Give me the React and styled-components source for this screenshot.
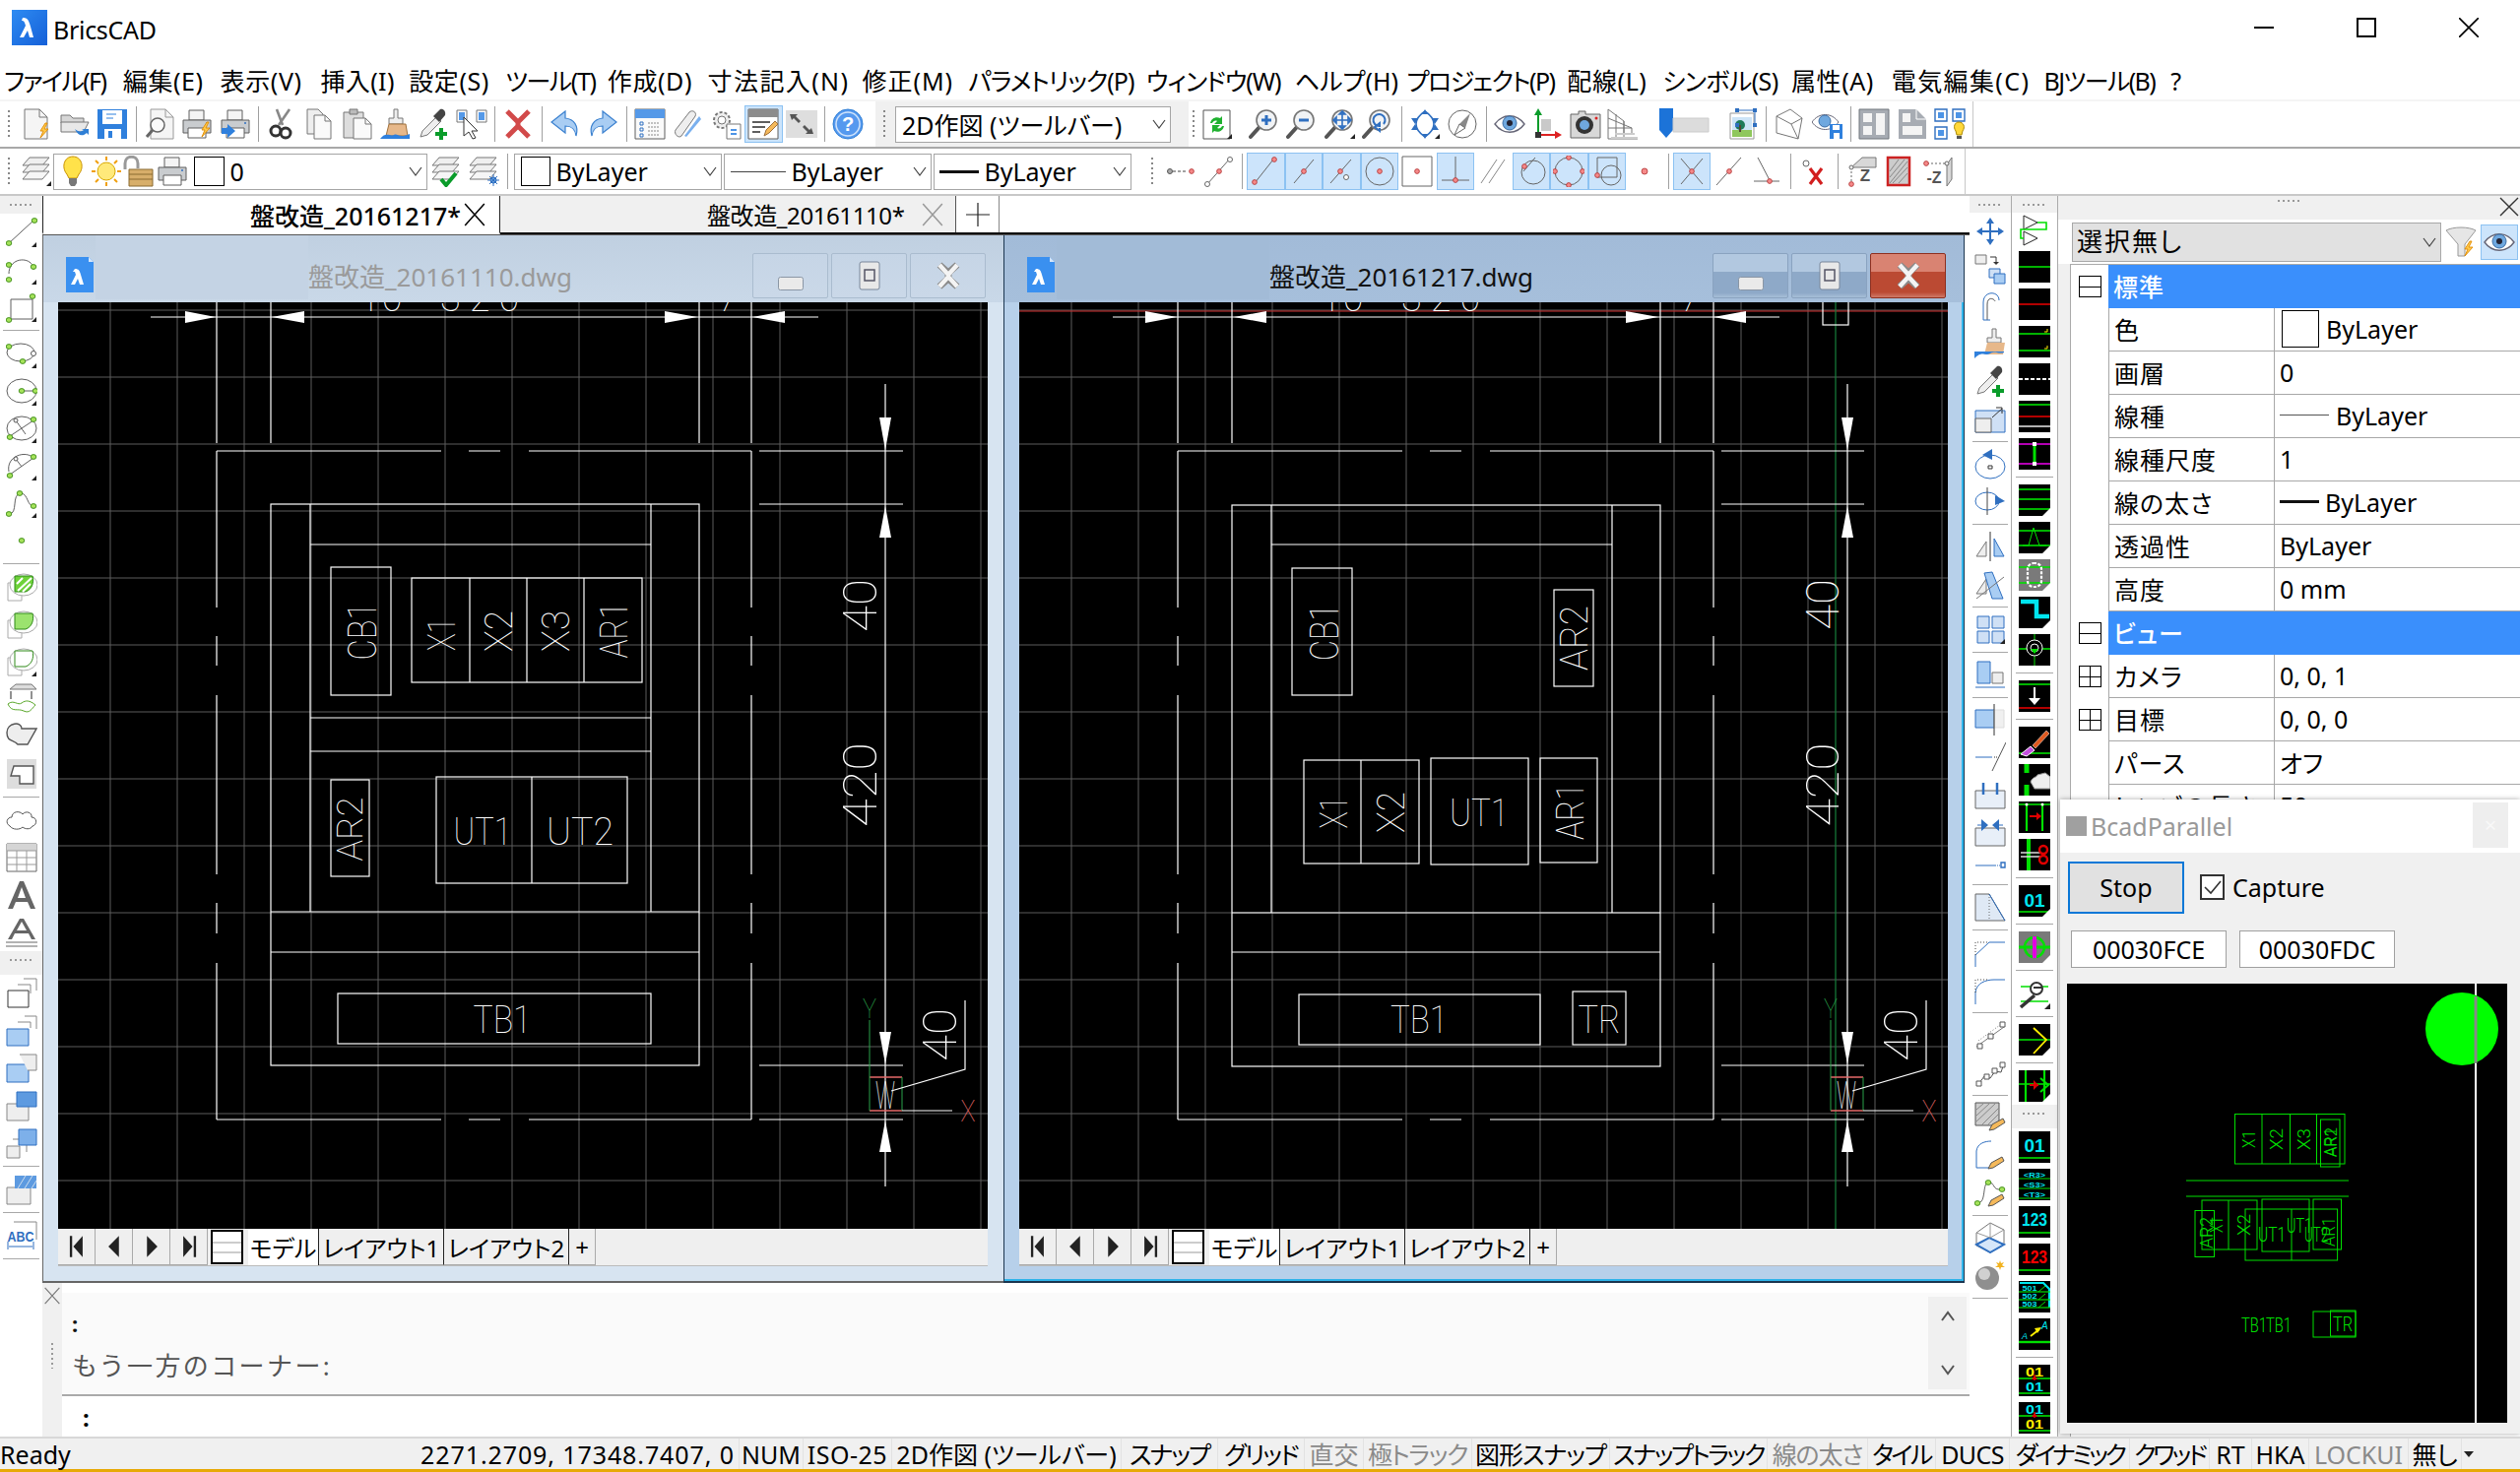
import React from 'react';
import styled, { createGlobalStyle } from 'styled-components';

const Global = createGlobalStyle`
  html, body { margin: 0; padding: 0; background: #fff; overflow: hidden; }
  #root { width: 2559px; height: 1495px; }
  * { box-sizing: border-box; }
`;
const FONT = `"Noto Sans", "Noto Sans CJK JP", sans-serif`;

const Page = styled.div`
  width: 2559px; height: 1495px; position: relative; overflow: hidden; background: #fff;
  display: flex; flex-direction: column; font-family: ${FONT}; font-size: 25px; color: #000;
  font-feature-settings: "palt" 1;
`;
const TitleBar = styled.div`height: 58px; display: flex; align-items: flex-start; flex: none;`;
const AppName = styled.div`margin: 11px 0 0 6px; font-size: 25px; line-height: 38px; letter-spacing: -0.3px;`;
const WinBtns = styled.div`margin-left: auto; display: flex;`;
const WinBtn = styled.div`width: 104px; height: 56px; display: flex; align-items: center; justify-content: center;`;
const MenuBar = styled.div`height: 45px; flex: none; display: flex; align-items: center; padding: 4px 0 0 4px; border-bottom: 2px solid #f4f4f4; white-space: nowrap;`;
const MenuItem = styled.div`width: ${p => p.$w}px; margin-right: 15.8px; font-size: 25px; line-height: 38px; letter-spacing: ${p => p.$ls || 0}px; flex: none;`;

const ToolRow = styled.div`height: ${p => p.$h}px; flex: none; display: flex; align-items: stretch; border-bottom: 2px solid ${p => p.$line};`;
const Tool = styled.div`display: flex; align-items: center; padding-left: ${p => p.$pl || 0}px; width: ${p => p.$w}px; flex: none; background: ${p => p.$bg || '#fff'}; border-right: ${p => p.$end ? '1px solid #c8c8c8' : 'none'};`;
const Grip = styled.div`width: 2px; height: 28px; flex: none; margin: 0 ${p => p.$m || 8}px; background: repeating-linear-gradient(#888 0 2px, transparent 2px 5px);`;
const HGrip = styled.div`height: 2px; width: 24px; margin: ${p => p.$t || 8}px auto 0; background: repeating-linear-gradient(90deg, #999 0 2px, transparent 2px 5px);`;
const Cell = styled.div`
  width: ${p => p.$w || 38.5}px; height: 38px; flex: none; display: flex; align-items: center; justify-content: center;
  ${p => p.$on ? 'background:#cce4fb; box-shadow: inset 0 0 0 1px #8cc2f2;height:38px;' : ''}
`;
const Sep = styled.div`width: 1px; height: 36px; margin: 0 ${p => p.$m ?? 4}px; background: #a0a0a0; flex: none;`;
const Spacer = styled.div`width: ${p => p.$w}px; flex: none;`;
const Combo = styled.div`
  width: ${p => p.$w}px; height: 37px; flex: none; margin-left: ${p => p.$ml || 0}px; background: #fff; border: 1px solid #a5a5a5;
  display: flex; align-items: center; position: relative; padding-left: ${p => p.$pl || 6}px; font-size: 25px; white-space: nowrap;
`;
const Chevron = styled.svg`position: absolute; right: 4px; top: 50%; margin-top: -5px; width: 14px; height: 10px;`;
const Swatch = styled.div`width: ${p => p.$w || 30}px; height: ${p => p.$h || 30}px; border: 1px solid #000; background: #fff; flex: none; margin: 0 ${p => p.$mr || 6}px 0 ${p => p.$ml || 0}px;`;
const LineSample = styled.div`width: ${p => p.$w}px; height: ${p => p.$t}px; background: ${p => p.$c}; flex: none; margin-right: ${p => p.$mr || 6}px;`;

const Body = styled.div`height: 1260px; flex: none; display: flex;`;
const VBar = styled.div`
  width: ${p => p.$w}px; flex: none; display: flex; flex-direction: column; align-items: center; background: #fff;
  border-right: ${p => p.$b ? '1px solid #aaa' : 'none'};
`;
const GripHead = styled.div`width: 100%; height: ${p => p.$h || 18}px; background: #f0f0f0; flex: none;`;
const VCell = styled.div`height: ${p => p.$h || 38}px; width: 100%; flex: none; display: flex; align-items: center; justify-content: center;`;
const VSep = styled.div`height: 1px; width: 84%; background: #a8a8a8; flex: none; margin: ${p => p.$m ?? 4}px 0;`;

const Center = styled.div`width: 1957px; flex: none; display: flex; flex-direction: column; background: #fff;`;
const DocTabs = styled.div`height: 39px; flex: none; display: flex; background: #fff; border-bottom: 2px solid #111; position: relative;`;
const DocTab = styled.div`
  width: ${p => p.$w}px; flex: none; display: flex; align-items: center; padding-left: ${p => p.$pl}px; font-size: ${p => p.$on ? 25 : 24}px; letter-spacing: ${p => p.$on ? 0 : -0.4}px;
  background: ${p => p.$on ? '#fff' : p.$plain ? '#fff' : '#f0f0f0'}; border-right: 1px solid ${p => p.$on ? '#222' : p.$plain ? '#888' : '#555'};
  border-left: ${p => p.$on ? '1px solid #222' : 'none'}; border-bottom: ${p => p.$on ? '2px solid #fff' : 'none'}; margin-bottom: ${p => p.$on ? '-2px' : '0'};
  font-weight: ${p => p.$on ? 500 : 400}; white-space: nowrap;
`;
const MdiArea = styled.div`height: 1065px; flex: none; display: flex; padding-right: 4px; border-top: 1px solid #555;`;
const Win = styled.div`
  width: 976px; flex: none; display: flex; flex-direction: column; padding: 0 16px 15px 15px;
  background: ${p => p.$on ? '#b7d0ea' : '#d7e4f1'};
  border: 1px solid ${p => p.$on ? '#1b3650' : '#666'}; border-width: 0 ${p => p.$on ? 1 : 0}px 2px 1px;
  ${p => p.$on ? 'box-shadow: inset 0 -2px 0 #2fb4ea, inset -2px 0 0 #2fb4ea;' : ''}
`;
const WinTitle = styled.div`
  height: 68px; flex: none; margin: 0 -16px 0 -15px; padding: 0 18px 0 23px; display: flex; align-items: flex-start;
  background: ${p => p.$on ? 'linear-gradient(#a2bbd8, #a6bfdb)' : 'linear-gradient(#c0d0e1, #c9d8e8)'};
`;
const TitleFill = styled.div`width: 216px; height: 65px; flex: none; margin-left: 2px; background: ${p => p.$on ? '#a2bbd7' : '#c4d3e4'};`;
const TitleLogo = styled.div`margin-top: 22px; flex: none;`;
const TitleText = styled.div`margin-top: 22px; font-size: 26px; line-height: 40px; color: ${p => p.$on ? '#111' : '#9a9a9a'}; white-space: nowrap;`;
const TitleBtns = styled.div`margin: 18px 0 0 auto; display: flex; gap: 3px;`;
const TitleBtn = styled.div`
  width: 77px; height: 46px; display: flex; align-items: center; justify-content: center; border-radius: 2px; border: 1px solid ${p => p.$close ? '#8d3020' : p.$on ? '#8aa3c0' : '#aabccf'};
  background: ${p => p.$close ? 'linear-gradient(#d98372 0 40%, #bb4a33 40% 88%, #cf7a68)' : p.$on ? 'linear-gradient(#b2c8e0 0 40%, #8ea9c8 40% 90%, #a7bfd8)' : 'linear-gradient(#c6d5e6, #cad8e8)'};
`;
const MinWrap = styled.div`margin-top: 12px;`;
const CanvasBox = styled.div`height: 941px; flex: none; background: #000; overflow: hidden;`;
const Strip = styled.div`height: 38px; flex: none; background: #efefef; display: flex; align-items: stretch; border-bottom: 1px solid #bbb; font-size: 24px; white-space: nowrap;`;
const NavBtn = styled.div`width: 38px; flex: none; display: flex; align-items: center; justify-content: center; border: 1px solid #aaa; border-width: 0 1px 1px 0;`;
const SheetIcon = styled.div`width: 33px; flex: none; margin: 1px 5px 1px 3px; display: flex; border: 2px solid #000; background: #fff; align-items: center; justify-content: center;`;
const SheetTab = styled.div`
  width: ${p => p.$w}px; flex: none; display: flex; align-items: center; justify-content: center; background: ${p => p.$on ? '#fff' : '#efefef'};
  border-right: 1px solid ${p => p.$last ? '#aaa' : '#222'}; border-bottom: ${p => p.$on ? 'none' : '1px solid #aaa'};
`;

const CmdArea = styled.div`height: 156px; flex: none; display: flex;`;
const CmdSide = styled.div`width: 20px; flex: none; background: #f0f0f0; display: flex; flex-direction: column; align-items: center; padding-top: 4px;`;
const CmdGrip = styled.div`width: 2px; height: 26px; margin-top: 39px; background: repeating-linear-gradient(#999 0 2px, transparent 2px 5px);`;
const CmdMain = styled.div`flex: 1; display: flex; flex-direction: column;`;
const CmdTop = styled.div`height: 10px; flex: none;`;
const History = styled.div`height: 105px; flex: none; display: flex; background: #fafafa; border-bottom: 2px solid #aaa;`;
const HistText = styled.div`flex: 1; padding: 10px 0 0 10px; font-size: 26px; line-height: 43px; color: #555; font-feature-settings: normal; letter-spacing: 2.4px;`;
const HistColon = styled.div`color: #111; font-weight: 700; font-size: 22px;`;
const Scroll = styled.div`width: 39px; flex: none; margin: 4px 3px 5px 0; background: #f0f0f0; display: flex; flex-direction: column; align-items: center; justify-content: space-between; padding: 14px 0;`;
const CmdInput = styled.div`flex: 1; background: #fff; padding-left: 21px; font-weight: 700; font-size: 24px; line-height: 44px;`;

const StatusBar = styled.div`height: 36px; flex: none; display: flex; background: #f0f0f0; border-top: 2px solid #d8d8d8; border-bottom: 3px solid #e7a906; font-size: 25px; white-space: nowrap; position: relative; z-index: 3;`;
const Stat = styled.div`width: ${p => p.$w}px; flex: none; display: flex; align-items: center; justify-content: ${p => p.$left ? 'flex-start' : 'center'}; color: ${p => p.$gray ? '#8a8a8a' : '#000'}; border-right: ${p => p.$nb ? 'none' : '1px solid #e2e2e2'}; letter-spacing: ${p => p.$ls || 0}px; line-height: 30px;`;

const Panel = styled.div`width: 469px; flex: none; background: #f0f0f0; display: flex; flex-direction: column; position: relative;`;
const PanelHead = styled.div`height: 24px; flex: none; position: relative;`;
const PanelClose = styled.svg`position: absolute; right: 0; top: 0; width: 22px; height: 22px;`;
const SelRow = styled.div`height: 45px; flex: none; display: flex; align-items: center; padding-left: 14px; background: #fff;`;
const SelCombo = styled.div`width: 375px; height: 40px; flex: none; background: #e1e1e1; border: 1px solid #a8a8a8; display: flex; align-items: center; padding: 0 0 4px 4px; position: relative; font-size: 26px; letter-spacing: 2px;`;
const EyeBtn = styled.div`width: 38px; height: 36px; background: #cce4fb; border: 1px solid #8cc2f2; display: flex; align-items: center; justify-content: center; margin-left: 4px;`;
const Props = styled.div`flex: 1; margin-left: 12px; background: #fff; border-left: 1px solid #aaa; border-top: 1px solid #aaa; overflow: hidden;`;
const Row = styled.div`height: 44px; display: grid; grid-template-columns: 38px 169px 1fr;`;
const Exp = styled.div`display: flex; align-items: center; justify-content: center;`;
const ExpBox = styled.div`width: 23px; height: 22px; border: 1px solid #000; position: relative; background: linear-gradient(#000, #000) center / 100% 1px no-repeat; ${p => p.$plus ? 'background: linear-gradient(#000,#000) center / 100% 1px no-repeat, linear-gradient(#000,#000) center / 1px 100% no-repeat;' : ''}`;
const Section = styled.div`grid-column: 2 / 4; background: #3a8ffc; color: #fff; font-size: 25px; font-weight: 500; display: flex; align-items: center; padding: 0 0 3px 5px; letter-spacing: 1px;`;
const Label = styled.div`border: 1px solid #a8a8a8; border-width: 0 1px 1px 1px; padding: 0 0 2px 5px; display: flex; align-items: center; font-size: 25px; letter-spacing: 1px; white-space: nowrap;`;
const Value = styled.div`border-bottom: 1px solid #a8a8a8; padding: 0 0 2px 5px; display: flex; align-items: center; font-size: 25px; white-space: nowrap;`;

const Float = styled.div`position: absolute; left: 2092px; top: 812px; width: 467px; height: 644px; background: #f0f0f0; box-shadow: 0 0 5px rgba(0,0,0,.35); z-index: 2; display: flex; flex-direction: column;`;
const FloatHead = styled.div`height: 54px; flex: none; background: #fff; display: flex; align-items: center; padding-left: 6px; color: #999; font-size: 25px; position: relative;`;
const FloatIcon = styled.div`width: 21px; height: 20px; background: #a0a0a0; margin-right: 4px;`;
const FloatX = styled.div`position: absolute; right: 12px; top: 3px; width: 36px; height: 46px; background: #eee; color: #f8f8f8; font-size: 22px; text-align: center; line-height: 44px;`;
const FloatBar = styled.div`height: 73px; flex: none; display: flex; align-items: center; padding: 0 0 3px 8px; font-size: 25px;`;
const StopBtn = styled.div`width: 118px; height: 53px; border: 2px solid #0a78d7; background: #e1e1e1; display: flex; align-items: center; justify-content: center;`;
const Check = styled.div`width: 25px; height: 26px; border: 2px solid #333; background: #fff; margin: 0 8px 0 16px; display: flex; align-items: center; justify-content: center;`;
const InputRow = styled.div`height: 60px; flex: none; display: flex; padding: 6px 0 0 11px; gap: 13px;`;
const Hex = styled.div`width: 158px; height: 38px; background: #fff; border: 1px solid #a0a0a0; display: flex; align-items: center; justify-content: center; font-size: 25px;`;
const Preview = styled.div`width: 447px; height: 446px; margin-left: 7px; background: #000; flex: none;`;

const Svg = ({ w = 32, h = 32, vb = '0 0 32 32', children }) => (
  <svg width={w} height={h} viewBox={vb} fill="none" style={{ display: 'block', flex: 'none' }}>{children}</svg>
);

const DK = '#5f5f5f', BL = '#2f6fc0', GR = '#5aa82a';
const Corner = () => <path d="M31 26v5h-5z" fill="#222" />;
const Dot = ({ x, y, r = 2.4, c = '#f58a8a', s = '#b03030' }) => <circle cx={x} cy={y} r={r} fill={c} stroke={s} strokeWidth=".8" />;
const GDot = ({ x, y }) => <ellipse cx={x} cy={y} rx="2.8" ry="2.4" fill="#a6e35a" stroke="#3c8a18" strokeWidth=".9" />;

const Bolt = ({ x = 0, y = 0 }) => <path transform={`translate(${x} ${y})`} d="M6 0L1 8h3l-3 7 8-9H5l3-6z" fill="#ffc94a" stroke="#e08a00" strokeWidth=".9" />;
const Printer = ({ dx = 0 }) => (
  <g transform={`translate(${dx} 0)`}>
    <path d="M8 2h15v10H8z" fill="#f4f4f4" stroke={DK} />
    <path d="M2 12h28v13H2z" fill="#c9cccf" stroke={DK} />
    <path d="M7 20h18v10H7z" fill="#fff" stroke={DK} />
    <circle cx="26" cy="15" r="1" fill={BL} />
  </g>
);
const Mag = ({ children }) => (
  <>
    <path d="M11 19L2 29" stroke="#555" strokeWidth="4" strokeLinecap="round" />
    <circle cx="18" cy="12" r="10" fill="#f1f3f5" stroke="#777" strokeWidth="1.6" />
    {children}
  </>
);
const Stack = ({ children }) => (
  <>
    <path d="M2 10l7-8h20l-7 8z" fill="#efefef" stroke="#777" />
    <path d="M2 17l7-8h20l-7 8z" fill="#efefef" stroke="#777" />
    <path d="M2 24l7-8h20l-7 8z" fill="#f6f6f6" stroke="#777" />
    {children}
  </>
);

const icons = {
  newfile: <><path d="M4 1h15l8 8v22H4z" fill="#f5f5f5" stroke="#777" /><path d="M19 1v8h8" stroke="#777" /><Bolt x="19" y="15" /></>,
  open: <><path d="M2 7h9l3 3h11v5H2z" fill="#d6d6d6" stroke="#777" /><path d="M2 24V14h28l-5 10z" fill="#e8e8e8" stroke="#777" /><path d="M16 21c3 3 7 3 9 1l-2-1h7v6l-2-2c-4 4-9 3-12-4z" fill="#2f7fd5" /></>,
  save: <><path d="M1 1h30v30H1z" fill="#2f80dd" /><path d="M6 2h20v14H6z" fill="#fff" /><path d="M10 6h10M10 10h7" stroke="#2f80dd" /><path d="M8 21h17v10H8z" fill="#fff" /><path d="M12 23h4v7h-4z" fill="#2f80dd" /></>,
  preview: <><path d="M7 1h15l8 8v22H7z" fill="#f5f5f5" stroke="#999" /><path d="M22 1v8h8" stroke="#999" /><circle cx="14" cy="17" r="7" fill="#fafafa" stroke="#666" strokeWidth="1.5" /><path d="M9 22l-6 7" stroke="#666" strokeWidth="3" /></>,
  printbolt: <><Printer /><Bolt x="20" y="14" /></>,
  printto: <><Printer /><path d="M2 20h6v-4l8 7-8 7v-4H2z" fill="#2f80dd" /></>,
  cut: <><path d="M13 17L24 1M17 17L11 1" stroke="#888" strokeWidth="2.6" /><circle cx="10" cy="23" r="5" stroke="#333" strokeWidth="3" /><circle cx="20" cy="25" r="5" stroke="#333" strokeWidth="3" /></>,
  copy: <><path d="M3 1h11l5 5v20H3z" fill="#eee" stroke="#777" /><path d="M10 7h11l6 6v18H10z" fill="#fafafa" stroke="#777" /><path d="M21 7v6h6" stroke="#777" /></>,
  paste: <><path d="M2 4h20v26H2z" fill="#ddd" stroke="#777" /><path d="M8 1h8v5H8z" fill="#bbb" stroke="#777" /><path d="M12 10h12l6 6v15H12z" fill="#fafafa" stroke="#777" /><path d="M24 10v6h6" stroke="#777" /></>,
  brush: <><path d="M14 1h4v9h5v6H9v-6h5z" fill="#eee" stroke="#777" /><path d="M9 16h17l2 12H6z" fill="#e7b88a" stroke="#a0703a" /><path d="M0 31c6-8 10-2 14-4s5 4 16-1v5z" fill="#2f80dd" /></>,
  dropper: <><path d="M3 29l2-6 14-14 5 4-14 14z" fill="#eee" stroke="#777" /><path d="M16 8l7-7c3-1 6 2 5 6l-6 7z" fill="#444" /><path d="M22 20h4v4h4v4h-4v4h-4v-4h-4v-4h4z" fill="#0a9c2a" /></>,
  select: <><path d="M1 2h10v12H1zM21 2h10v12H21z" fill="#fff" stroke="#777" /><path d="M3 4h6v8H3zM23 4h6v8h-6z" fill="#5599e8" /><path d="M8 9v19l5-4 4 7 3-1-4-7h6z" fill="#fff" stroke="#333" /></>,
  xred: <path d="M5 3l11 11L27 3M5 29l11-11 11 11M16 14v4" stroke="#d24a4a" strokeWidth="5" />,
  undo: <path d="M16 3L2 14l14 11v-7c7 0 10 3 11 10 3-10-2-17-11-18z" fill="#a9cdf3" stroke="#3a80cf" strokeWidth="1.2" />,
  redo: <path d="M16 3l14 11-14 11v-7c-7 0-10 3-11 10C2 18 7 11 16 10z" fill="#a9cdf3" stroke="#3a80cf" strokeWidth="1.2" />,
  props: <><path d="M1 1h30v30H1z" fill="#fafafa" stroke={DK} /><path d="M1 1h30v9H1z" fill="#5599e8" /><path d="M6 14h3v3H6zM6 20h3v3H6zM6 26h3v3H6z" stroke={BL} /><path d="M14 15h12M14 19h12M14 23h12M14 27h12" stroke="#888" strokeDasharray="2 1" /></>,
  sheet: <><path d="M4 22L18 4c3-3 8 0 6 4L10 28c-3 3-8-2-6-6z" fill="#eee" stroke="#777" /><path d="M13 28L28 8l2 3-15 18z" fill="#7ab0ee" /></>,
  gear: <><circle cx="12" cy="12" r="8" fill="#eee" stroke="#777" strokeWidth="2" strokeDasharray="3 2" /><circle cx="12" cy="12" r="4" fill="#fff" stroke="#777" /><path d="M17 16h14v15H17z" fill="#fff" stroke="#777" /><path d="M21 21h6v2h-6zM21 25h6v2h-6z" fill="#4d94e6" /></>,
  notes: <><path d="M1 1h30v30H1z" fill="#fff" stroke={DK} /><path d="M1 1h30v8H1z" fill="#8c8c8c" /><path d="M5 14h18M5 19h13M5 24h8" stroke={DK} strokeWidth="1.8" /><path d="M17 28l2-6 9-9 3 3-9 9z" fill="#f5b95a" stroke="#a0703a" /></>,
  expand: <><path d="M0 2h32v28H0z" fill="#dedede" /><path d="M4 6h8l-2 2 5 5-2 2-5-5-2 2zM28 26h-8l2-2-5-5 2-2 5 5 2-2z" fill="#555" /></>,
  help: <><circle cx="16" cy="16" r="15" fill="#5599ef" stroke="#2f7fd5" /><circle cx="16" cy="16" r="12" stroke="#cfe3fb" strokeWidth="1.5" /><text x="16" y="23" fontSize="20" fontWeight="700" fontFamily="Liberation Sans" fill="#fff" textAnchor="middle">?</text></>,
  sync: <><path d="M2 2h27v29H2z" fill="#fff" stroke="#555" /><path d="M9 15c1-5 6-7 10-5l2-2v8h-8l3-3c-2-1-4 0-5 2zM23 18c-1 5-6 7-10 5l-2 2v-8h8l-3 3c2 1 4 0 5-2z" fill="#1fb12f" /><Corner /></>,
  zoomin: <Mag><path d="M13 12h10M18 7v10" stroke={BL} strokeWidth="3" /></Mag>,
  zoomout: <Mag><path d="M13 12h10" stroke={BL} strokeWidth="3" /></Mag>,
  zoompan: <Mag><path d="M18 4v16M10 12h16M18 3l-3 3h6zM18 21l-3-3h6zM9 12l3-3v6zM27 12l-3-3v6z" stroke={BL} strokeWidth="1.6" /><Corner /></Mag>,
  zoomprev: <Mag><path d="M22 16a6 6 0 1 0-4 2v-3l-5 4 5 4v-3" stroke={BL} strokeWidth="2" /></Mag>,
  orbit: <><path d="M16 3c-12 8-12 18 0 26M16 3c12 8 12 18 0 26" stroke={BL} strokeWidth="1.6" /><path d="M16 1l-3 5h6zM16 31l-3-5h6zM2 10l7 0-3 6zM30 10h-7l3 6zM2 22l7 0-3-6zM30 22h-7l3-6z" fill={BL} /><Corner /></>,
  compass: <><circle cx="16" cy="16" r="14" fill="#fff" stroke="#666" /><path d="M24 5L13 16l6 4z" fill="#888" /><path d="M8 27l5-11 6 4z" fill="#fff" stroke="#666" /></>,
  eye: <><path d="M1 16c8-11 22-11 30 0-8 11-22 11-30 0z" fill="#fff" stroke="#667" strokeWidth="1.4" /><circle cx="16" cy="15" r="7" fill="#6fa8df" stroke="#3b6da5" /><circle cx="16" cy="15" r="3" fill="#223" /></>,
  ucs: <><path d="M7 26V3" stroke="#0a9c2a" strokeWidth="2" /><path d="M7 0l-4 7h8z" fill="#0a9c2a" /><path d="M7 27h18" stroke="#d22" strokeWidth="2" /><path d="M31 27l-7-4v8z" fill="#d22" /><path d="M4 24h6v6H4z" fill="#333" /><path d="M10 11h10v12H10z" fill="#c9c9c9" /></>,
  camera: <><path d="M1 6h8V3h7v3h15v24H1z" fill="#d8d8d8" stroke="#666" /><circle cx="15" cy="17" r="9" fill="#333" /><circle cx="15" cy="17" r="5" fill="#6fa8df" /><circle cx="27" cy="10" r="1.5" fill="#d22" /></>,
  persp: <><path d="M1 1v30h30M1 1l16 12v14M1 10l24 10v7M1 20h24M9 6v25M17 13v18" stroke="#777" /><path d="M4 30h27M8 26h20" stroke="#ccc" strokeWidth="2" /></>,
  image: <><path d="M3 5h24v26H3z" fill="#fff" stroke="#999" /><path d="M5 22h20v7H5z" fill="#8fc75c" /><path d="M5 9h20v13H5z" fill="#cde4f7" /><circle cx="13" cy="17" r="5" fill="#1e7a5a" /><path d="M13 17v7" stroke="#543" strokeWidth="2" /><path d="M10 2h18v17" stroke="#2f6fc0" /><path d="M8 0h4v4H8zM26 0h4v4h-4zM26 15h4v4h-4zM8 15h4v4H8z" fill="#2f6fc0" /></>,
  cube: <><path d="M3 8l14-7 12 9-4 21-22-6z" fill="#fff" stroke="#777" /><path d="M3 8l15 8 11-6M18 16l7 15" stroke="#777" /></>,
  eyesave: <><path d="M0 14c7-10 20-10 27 0-7 10-20 10-27 0z" fill="#fff" stroke="#667" /><circle cx="13" cy="13" r="6" fill="#6fa8df" stroke="#3b6da5" /><path d="M18 16h13v15H18z" fill="#2f80dd" /><path d="M21 17h7v5h-7zM22 25h6v6h-6z" fill="#fff" /></>,
  panel1: <><path d="M1 1h30v30H1z" fill="#a7acb3" stroke="#70767d" /><path d="M5 5h9v9H5zM5 18h9v9H5zM18 5h9v22h-9z" fill="#f4f4f4" /></>,
  panel2: <><path d="M2 1h18l10 10v20H2z" fill="#a7acb3" /><path d="M6 5h8v9H6zM6 18h20v9H6z" fill="#f4f4f4" /><path d="M20 1v10h10" stroke="#fff" /></>,
  panel3: <><path d="M1 1h12v12H1zM1 19h12v12H1zM19 1h12v12H19z" fill="#fff" stroke={BL} strokeWidth="1.4" /><path d="M4 4h6v6H4zM4 22h6v6H4zM22 4h6v6h-6z" fill="#4d94e6" /><path d="M25 14c5 0 7 5 4 9l-1 4h-5l-1-4c-3-4-1-9 3-9z" fill="#ffd83a" stroke="#a80" /><path d="M23 28h5v3h-5z" fill="#555" /></>,
  layer: <><Stack /><Corner /></>,
  layercheck: <Stack><path d="M11 24l5 6 10-12" stroke="#0a9c2a" strokeWidth="4" /></Stack>,
  layerstar: <Stack><circle cx="26" cy="25" r="3" fill="#8fc3f5" stroke={BL} /><path d="M26 19v12M20 25h12M22 21l8 8M30 21l-8 8" stroke={BL} /></Stack>,
  bulb: <><path d="M14 1c9 0 12 11 6 18l-2 4H10l-2-4C2 12 5 1 14 1z" fill="#ffe24a" stroke="#c89000" /><path d="M10 23h8v5l-2 3h-4l-2-3z" fill="#777" /></>,
  sun: <><circle cx="16" cy="16" r="9" fill="#ffe97a" stroke="#d9a800" /><path d="M16 1v4M16 27v4M1 16h4M27 16h4M5 5l3 3M24 24l3 3M5 27l3-3M24 8l3-3" stroke="#f0a010" strokeWidth="2" /></>,
  lock: <><path d="M3 14V8c0-9 13-9 13 0v5" stroke="#999" strokeWidth="3" /><path d="M7 14h24v17H7z" fill="#d7ae6a" stroke="#8a6a30" /><path d="M7 19h24M7 24h24" stroke="#8a6a30" /></>,
  print: <Printer />,
  dashdot: <><circle cx="5" cy="16" r="2.5" fill="#aaa" stroke="#555" /><path d="M8 16h15" stroke="#444" strokeDasharray="3 2" /><Dot x="27" y="16" /></>,
  snapline: <><path d="M4 29L27 3" stroke="#666" /><circle cx="27" cy="4" r="2.5" fill="#fff" stroke="#666" /><circle cx="4" cy="29" r="2.5" fill="#fff" stroke="#666" /><Dot x="16" y="16" /></>,
  end: <><path d="M5 28L24 4" stroke="#666" /><Dot x="5" y="27" /><Dot x="25" y="4" /></>,
  mid: <><path d="M6 28L26 4" stroke="#666" /><Dot x="16" y="16" /></>,
  mid2: <><path d="M5 28L26 4" stroke="#666" /><Dot x="15" y="16" /><circle cx="21" cy="22" r="2.5" fill="#fff" stroke="#666" /></>,
  cen: <><circle cx="16" cy="16" r="14" stroke="#666" /><Dot x="16" y="16" /></>,
  node: <><path d="M1 1h30v30H1z" fill="#fff" stroke="#666" /><Dot x="16" y="16" /></>,
  perp: <><path d="M16 1v24M2 25h28" stroke="#666" /><Dot x="16" y="25" /></>,
  par: <path d="M4 28L20 4M12 28L28 4" stroke="#888" />,
  tan: <><circle cx="18" cy="17" r="12" stroke="#666" /><path d="M8 16L20 2" stroke="#666" /><Dot x="9" y="11" /></>,
  quad: <><ellipse cx="16" cy="16" rx="14" ry="14" stroke="#666" /><Dot x="16" y="2" /><Dot x="16" y="30" /><Dot x="2" y="16" /><Dot x="30" y="16" /></>,
  circsq: <><path d="M6 2h20v20H6z" stroke="#666" /><circle cx="20" cy="20" r="10" stroke="#666" /><Dot x="6" y="20" /></>,
  dot: <Dot x="16" y="16" r="3" />,
  inter: <><path d="M5 3l22 26M27 3L5 29" stroke="#666" /><Dot x="16" y="16" /></>,
  ext: <><path d="M3 30L28 2" stroke="#666" /><Dot x="16" y="16" /></>,
  tri: <><path d="M6 2l12 23M2 26h26" stroke="#666" /><Dot x="18" y="26" /></>,
  xs: <><circle cx="8" cy="8" r="3" fill="#fff" stroke="#666" /><path d="M12 13l12 16M24 13L12 29" stroke="#d21f1f" strokeWidth="3.2" /></>,
  zup: <><path d="M6 12L17 2h14v10z" fill="#d8d8d8" stroke="#777" /><path d="M6 12v17" stroke="#666" strokeDasharray="2 2" /><circle cx="6" cy="12" r="2" fill="#fff" stroke="#666" /><Dot x="6" y="29" /><text x="20" y="26" fontSize="17" fontWeight="700" fontFamily="Liberation Sans" fill="#555" textAnchor="middle">Z</text></>,
  rectred: <><path d="M5 2h22v28H5z" fill="#ccc" stroke="#c22" strokeWidth="2.5" /><path d="M7 28L25 6M7 22L22 4M10 28L25 12M7 16L16 4M16 28l9-10" stroke="#888" /></>,
  zdown: <><path d="M31 2v22l-5 7V9z" fill="#d8d8d8" stroke="#777" /><path d="M6 8h19" stroke="#666" strokeDasharray="2 2" /><Dot x="5" y="8" /><circle cx="26" cy="8" r="2" fill="#fff" stroke="#666" /><text x="13" y="28" fontSize="16" fontWeight="700" fontFamily="Liberation Sans" fill="#555" textAnchor="middle">-Z</text></>,
  line: <><path d="M3 27L28 4" stroke={DK} /><GDot x="3" y="27" /><GDot x="29" y="4" /><Corner /></>,
  arc: <><path d="M3 20C3 2 28 2 28 16" stroke={DK} /><GDot x="3" y="11" /><GDot x="3" y="26" /><GDot x="28" y="13" /><Corner /></>,
  rect: <><path d="M5 8h22v20H5z" stroke={DK} /><GDot x="27" y="5" /><GDot x="3" y="29" /><Corner /></>,
  c3: <><ellipse cx="15" cy="15" rx="14" ry="9" stroke={DK} /><GDot x="3" y="9" /><GDot x="17" y="24" /><circle cx="28" cy="16" r="2.5" fill="#fff" stroke="#555" /><Corner /></>,
  c2: <><ellipse cx="16" cy="16" rx="15" ry="12" stroke={DK} /><path d="M16 16h14" stroke={DK} /><GDot x="16" y="16" /><GDot x="30" y="16" /><Corner /></>,
  ell: <><ellipse cx="16" cy="16" rx="15" ry="12" stroke={DK} /><path d="M4 24L28 8M10 8l10 14" stroke={DK} /><GDot x="4" y="25" /><GDot x="28" y="7" /><circle cx="10" cy="8" r="2" fill="#fff" stroke="#555" /><Corner /></>,
  ellarc: <><path d="M3 22C0 6 20 0 28 8" stroke={DK} /><path d="M4 25L28 8M10 9l6 8" stroke={DK} /><GDot x="4" y="26" /><GDot x="28" y="7" /><circle cx="10" cy="9" r="2" fill="#fff" stroke="#555" /><Corner /></>,
  spline: <><path d="M3 27c10 0 2-20 12-21 8 0 6 14 14 13" stroke={DK} /><GDot x="3" y="27" /><GDot x="14" y="6" /><GDot x="28" y="19" /><Corner /></>,
  gdot: <GDot x="16" y="16" />,
  hatch: <><path d="M2 12h14v18H2z" fill="#fff" stroke="#aaa" /><ellipse cx="18" cy="14" rx="14" ry="11" fill="#fff" stroke="#aaa" /><path d="M9 5h18c2 7-1 14-7 16H9z" fill="#6ed23a" stroke="#2f8a18" /><path d="M12 20L26 7M17 21l8-8M11 13l6-6" stroke="#fff" strokeWidth="2" /></>,
  grad: <><path d="M2 12h14v18H2z" fill="#fff" stroke="#aaa" /><ellipse cx="18" cy="14" rx="14" ry="11" fill="#fff" stroke="#aaa" /><path d="M9 5h18c2 7-1 14-7 16H9z" fill="#9be36e" stroke="#2f8a18" /></>,
  bound: <><path d="M2 12h14v18H2z" fill="#fff" stroke="#aaa" /><ellipse cx="18" cy="14" rx="14" ry="11" fill="#fff" stroke="#aaa" /><path d="M9 5h18c2 7-1 14-7 16H9z" fill="#fff" stroke="#2f8a18" /><Corner /></>,
  surf: <><path d="M4 6L10 1h16l5 5z" fill="#ddd" stroke="#777" /><path d="M5 8v8M26 8v8" stroke="#222" /><path d="M2 21c6-5 10 2 14-1s8-3 14 2c-4 4-6 9-12 6S6 30 2 21z" stroke={GR} /></>,
  region: <path d="M1 12C1 2 16 0 16 8h15l-9 16H12c-4-5-11-2-11-12z" fill="#eee" stroke="#555" strokeWidth="1.4" />,
  wipe: <><path d="M1 1h30v30H1z" fill="#ddd" /><path d="M8 8h20v18H14v-8H5z" fill="#fff" stroke="#555" strokeWidth="1.4" /></>,
  cloud: <path d="M4 22c-5-3-3-9 2-9 0-6 8-7 11-3 3-4 10-2 9 3 6 0 6 8 1 9-2 4-8 3-10 1-3 3-10 3-13-1z" stroke="#555" />,
  table: <><path d="M1 2h30v28H1z" fill="#fff" stroke="#666" /><path d="M1 2h30v7H1z" fill="#d5d5d5" /><path d="M1 9h30M1 16h30M1 23h30M11 9v21M21 9v21" stroke="#999" /></>,
  bigA: <path fillRule="evenodd" d="M2 30L14 2h4l12 28h-5l-3-7H10l-3 7zM12 19h8l-4-11z" fill="#666" />,
  bigAu: <><path fillRule="evenodd" d="M2 23L14 2h4l12 21h-4l-3-6H9l-3 6zM11 14h10L16 5z" fill="#666" /><path d="M0 26h32M0 30h32" stroke="#666" /></>,
  b1: <><path d="M2 13h21v17H2z" fill="#fff" stroke="#333" /><path d="M12 7h13v9M18 1h13v12" stroke="#888" /></>,
  b2: <><path d="M1 14h22v17H1z" fill="#a9cdf3" stroke={BL} /><path d="M12 7h13v6M19 1h12v13" stroke="#888" /></>,
  b3: <><path d="M1 12h22v18H1z" fill="#a9cdf3" stroke={BL} /><path d="M14 2h17v16H22" fill="#eee" stroke="#888" /></>,
  b4: <><path d="M1 14h22v17H1z" fill="#eee" stroke="#888" /><path d="M11 2h20v15H11z" fill="#5d9ae0" stroke={BL} /></>,
  b5: <><path d="M1 19h13v12H1z" fill="#eee" stroke="#888" /><path d="M7 12h14v13" stroke="#888" /><path d="M13 2h18v16H13z" fill="#7db0ea" stroke={BL} /></>,
  b6: <><path d="M1 14h24v17H1z" fill="#eee" stroke="#888" /><path d="M9 2h22v13H9z" fill="#5d9ae0" /><path d="M12 15l8-13M19 15l8-13M26 15l5-8" stroke="#cde" /></>,
  abc: <><path d="M8 2h23v18" stroke="#888" /><text x="15" y="22" fontSize="14" fontWeight="700" fontFamily="Liberation Sans" textAnchor="middle" fill={BL} textLength="27" lengthAdjust="spacingAndGlyphs">ABC</text><path d="M2 22v8M28 22v8M3 27h24" stroke={BL} /></>,
  move: <path d="M16 2l-4 6h3v7H8v-3l-6 4 6 4v-3h7v7h-3l4 6 4-6h-3v-7h7v3l6-4-6-4v3h-7V8h3z" fill={BL} />,
  cpy: <><path d="M1 2h11v9H1z" fill="#eee" stroke="#777" /><path d="M16 4h6v6" stroke="#333" /><path d="M19 9l3 3 3-3" fill="#333" /><path d="M15 16h11v9H15z" fill="#cfe0f5" stroke={BL} /><path d="M20 21h11v10H20z" fill="#a9cdf3" stroke={BL} /></>,
  offset: <><path d="M9 30V12C9 0 25 0 25 10" stroke={BL} /><path d="M13 30V14c0-8 7-6 8-3" stroke="#555" /><path d="M9 30h7" stroke={BL} /></>,
  sbrush: <><path d="M18 1h4v9h5v5H13v-5h5z" fill="#eee" stroke="#777" /><path d="M13 15h18l-2 12H10z" fill="#e7b88a" /><path d="M0 31c8-8 10-2 16-5s8 1 14-1v-1H0z" fill="#2f80dd" /></>,
  scale: <><path d="M1 8h30v22H1z" fill="#cfe0f5" stroke={BL} /><path d="M1 16h16v14H1z" fill="#eee" stroke="#666" /><path d="M18 15L28 6M22 5h6v6" stroke="#333" /></>,
  rot: <><ellipse cx="16" cy="19" rx="15" ry="12" stroke={BL} /><path d="M18 1L8 7l10 5z" fill={BL} /><path d="M14 18h4v3h-4z" stroke="#333" /></>,
  rot3: <><ellipse cx="13" cy="16" rx="12" ry="9" stroke={BL} /><path d="M13 2v28" stroke="#444" /><path d="M31 16l-10-6v10z" fill={BL} /></>,
  mirror: <><path d="M12 26H2l10-15z" fill="#eee" stroke="#777" /><path d="M16 1v30" stroke="#333" /><path d="M20 26h10L20 8z" fill="#a9cdf3" stroke={BL} /></>,
  mirror3: <><path d="M12 26H2l10-15z" fill="#eee" stroke="#777" /><path d="M10 5l8 26h11L18 4z" fill="#a9cdf3" stroke={BL} /><path d="M2 31L30 9" stroke="#777" /></>,
  array: <><path d="M3 3h12v12H3zM18 3h12v12H18zM3 18h12v12H3zM18 18h12v12H18z" fill="#cfe0f5" stroke={BL} /><Corner /></>,
  align: <><path d="M3 3h13v22H3z" fill="#a9cdf3" stroke={BL} /><path d="M18 14h11v11H18z" fill="#eee" stroke="#777" /><path d="M1 29h30" stroke={BL} /></>,
  trim: <><path d="M1 6h19v18H1z" fill="#a9cdf3" stroke={BL} /><path d="M20 6h10v18H20z" fill="#f0f0f0" stroke="#ddd" /><path d="M20 0v32" stroke="#333" /></>,
  extline: <><path d="M1 16h17" stroke={BL} /><path d="M20 16h3" stroke="#333" strokeDasharray="1 1" /><path d="M32 1L18 30" stroke="#555" /></>,
  brk: <><path d="M1 12h30v18H1z" fill="#e8eff8" stroke="#666" /><path d="M9 4v12M23 4v12" stroke={BL} strokeWidth="2.5" /></>,
  join: <><path d="M1 12h30v18H1z" fill="#e8eff8" stroke="#666" /><path d="M3 9h10M29 9H19" stroke={BL} /><path d="M14 9L7 3v12zM18 9l7-6v12z" fill={BL} /></>,
  stretch: <><path d="M1 16h20" stroke={BL} /><path d="M21 16h5" stroke={BL} strokeDasharray="1 1" /><path d="M27 13h4v5h-4z" stroke={BL} strokeWidth="1.4" /></>,
  chamf: <><path d="M1 3h14l16 27H1z" fill="#dfe9f5" stroke="#666" /><path d="M15 3v27" stroke="#666" strokeDasharray="1 2" /><path d="M15 3l16 27" stroke={BL} /></>,
  cham2: <><path d="M1 31V19L15 6h16" stroke={BL} /><path d="M1 19V6h14" stroke="#444" strokeDasharray="1 2" /></>,
  fillet: <><path d="M1 31V19C2 9 12 6 20 6h11" stroke={BL} /><path d="M1 19V6h14" stroke="#444" strokeDasharray="1 2" /></>,
  pat1: <><path d="M2 28L30 8" stroke="#777" /><path d="M4 22L26 6" stroke="#777" strokeDasharray="1 2" /><path d="M3 25h5v5H3zM14 15h5v5h-5zM26 3h5v5h-5z" fill="#fff" stroke="#555" /></>,
  pat2: <><path d="M5 27l5-7 6 2 5-7 6 1 2-6" stroke="#555" /><path d="M2 25h5v5H2zM10 18h5v5h-5zM18 12h5v5h-5zM26 6h5v5h-5z" fill="#fff" stroke="#555" /></>,
  hedit: <><path d="M1 1h24v23H1z" fill="#ccc" stroke="#555" /><path d="M2 20L21 2M2 14L15 2M2 8L9 2M7 24L25 6M13 24L25 12" stroke="#888" /><path d="M15 29l3-6 11-6 2 4-11 7z" fill="#f5b95a" stroke="#555" /></>,
  pedit: <><path d="M2 29V12C3 4 11 2 17 2" stroke={BL} /><path d="M2 29h13" stroke={BL} /><path d="M14 30l3-6 11-6 2 4-11 7z" fill="#f5b95a" stroke="#555" /></>,
  spedit: <><path d="M3 27c10 0 4-22 12-21 6 0 3 8 12 7" stroke={DK} /><GDot x="3" y="27" /><GDot x="14" y="6" /><GDot x="28" y="13" /><path d="M14 30l3-6 11-6 2 4-11 7z" fill="#f5b95a" stroke="#555" /></>,
  box3: <><path d="M2 11L16 1l14 7v15L16 31 2 24z" fill="#fff" stroke="#777" /><path d="M2 23l13-7 15 7-14 8z" fill="#d5e6f9" stroke={BL} strokeWidth="2" /><path d="M16 1v15M2 11l14 5 14-8" stroke="#999" /></>,
  bomb: <><circle cx="13" cy="19" r="12" fill="#8f8f8f" /><circle cx="10" cy="15" r="6" fill="#d0d0d0" /><path d="M26 1l1 3 3-1-2 3 3 2-4 0-1 3-1-3-4 0 3-2-2-3 3 1z" fill="#f2b21f" /></>,
  funnel: <><path d="M1 4c7-4 23-4 30 0L20 18v12h-7V18z" fill="#e6e6e6" stroke="#999" /><Bolt x="19" y="15" /></>,
};

const Ic = ({ n, w = 32, h = 32 }) => <Svg w={w} h={h}>{icons[n]}</Svg>;

const G = '#00e000', C = '#00e6f0', Y = '#ffee00', R = '#e00000';
const Tile = ({ bg = '#000', corner, children }) => (
  <Svg>
    <rect width="32" height="32" fill={bg} />
    {children}
    {corner && <path d="M32 24L24 32h8z" fill="#fff" />}
  </Svg>
);
const TT = ({ x = 16, y, s = 15, c = C, children, l }) => (
  <text x={x} y={y} fontSize={s} fontWeight="700" fontFamily="Liberation Sans" fill={c} textAnchor="middle" textLength={l} lengthAdjust={l ? 'spacingAndGlyphs' : undefined}>{children}</text>
);
const ln = (y, c = G, w = 1.6) => <path d={`M0 ${y}h32`} stroke={c} strokeWidth={w} />;
const tiles = [
  <Svg key="sym"><path d="M5 1l14 7-14 7z" fill="#fff" stroke="#222" /><path d="M5 17l14 7-14 7z" fill="#fff" stroke="#222" /><path d="M19 8h9v7H2v9h3" stroke={G} strokeWidth="1.6" /></Svg>,
  <Tile key="a">{ln(16)}</Tile>,
  <Tile key="b">{ln(16, R)}</Tile>,
  <Tile key="c">{ln(8)}{ln(25)}<path d="M26 6h3V3M26 23h3v-3" stroke={Y} /></Tile>,
  <Tile key="d"><path d="M0 16h32" stroke="#fff" strokeWidth="2" strokeDasharray="4 2" /></Tile>,
  <Tile key="e">{ln(4)}{ln(16, R)}{ln(26, '#ddd')}</Tile>,
  <Tile key="f">{ln(6, '#e000e0')}{ln(26, '#e000e0')}<path d="M16 6v20" stroke={G} strokeWidth="3" /><path d="M14 4h4v4h-4zM14 24h4v4h-4z" fill="#fff" /></Tile>,
  <Tile key="g" corner>{ln(5)}{ln(15)}{ln(25)}</Tile>,
  <Tile key="h" corner>{ln(9)}{ln(24)}<path d="M4 24h6l5-18 6 18h7" stroke={G} /></Tile>,
  <Tile key="i" bg="#7a7a7a" corner>{ln(8)}{ln(24)}<rect x="9" y="4" width="14" height="24" rx="6" stroke="#fff" strokeWidth="2.2" strokeDasharray="3 1.5" /></Tile>,
  <Tile key="j" corner><path d="M2 5h16v15h13" stroke={C} strokeWidth="4.5" /></Tile>,
  <Tile key="k">{ln(15)}<path d="M16 0v32" stroke={G} strokeWidth="1" /><circle cx="16" cy="14" r="8" stroke="#fff" fill="#000" /><circle cx="16" cy="14" r="4" stroke="#fff" /><path d="M12 15h8l-4 5z" fill={G} /></Tile>,
  <Tile key="l">{ln(4)}{ln(28, R)}<path d="M16 7v14" stroke="#fff" strokeWidth="2" /><path d="M10 18h12l-6 7z" fill="#fff" /></Tile>,
  <Tile key="m">{ln(27)}<path d="M2 28l10-8 4 4-8 6z" fill="#c44fe0" stroke="#fff" /><path d="M14 19L28 4l3 3-14 15z" fill="#e05a20" stroke="#fff" strokeWidth=".5" /></Tile>,
  <Tile key="n"><path d="M8 0v9M8 21v11" stroke={G} strokeWidth="5" /><path d="M12 18c3-6 6-4 7-7l8-2 5 4v12H16z" fill="#eee" stroke="#999" /></Tile>,
  <Tile key="o">{ln(3)}<path d="M8 2v28M24 2v28" stroke={G} strokeWidth="2.2" /><path d="M11 15h9" stroke={R} strokeWidth="2" /><path d="M23 15l-5-4v8z" fill={R} /><circle cx="8" cy="3" r="1.5" fill="#fff" /><circle cx="24" cy="3" r="1.5" fill="#fff" /></Tile>,
  <Tile key="p"><path d="M10 0v32" stroke={G} strokeWidth="4" /><path d="M2 14h20M2 18h20" stroke="#ddd" strokeWidth="1.6" /><circle cx="25" cy="11" r="4" stroke={R} strokeWidth="2.4" /><circle cx="25" cy="21" r="4" stroke={R} strokeWidth="2.4" /></Tile>,
  <Tile key="q" corner><TT y="22" s="19">01</TT>{ln(27)}</Tile>,
  <Tile key="r" bg="#7a7a7a" corner>{ln(16, G, 3)}<circle cx="16" cy="16" r="10" stroke={G} strokeWidth="2.4" /><path d="M16 5v22" stroke="#e000e0" strokeWidth="4" /></Tile>,
  <Svg key="s"><path d="M2 9h28M2 24h28" stroke={G} strokeWidth="1.6" /><path d="M2 30l14-12" stroke="#333" strokeWidth="3.5" /><circle cx="18" cy="11" r="6" fill="#fff" stroke="#333" strokeWidth="2" /><path d="M15 10h8" stroke="#333" strokeWidth="2" /><path d="M26 32l6-6v6z" fill="#222" /></Svg>,
  <Tile key="t" corner>{ln(16)}<path d="M15 4l13 12-13 14" stroke={Y} strokeWidth="1.8" /></Tile>,
  <Tile key="u" corner>{ln(14)}<path d="M7 0v32M26 0v32" stroke={G} strokeWidth="2.2" /><path d="M11 15h9" stroke={R} strokeWidth="2" /><path d="M20 15l-5-5v10z" fill={R} /><path d="M22 8l8 7-8 7" stroke={G} strokeWidth="2" /></Tile>,
];
const tiles2 = [
  <Tile key="a"><TT y="21" s="19">01</TT>{ln(27)}</Tile>,
  <Tile key="b"><TT y="9" s="7.5" l="22">{'<R3>'}</TT>{ln(10, G, 1)}<TT y="19" s="7.5" l="22">{'<S3>'}</TT>{ln(20, G, 1)}<TT y="29" s="7.5" l="22">{'<T3>'}</TT>{ln(30, G, 1)}</Tile>,
  <Tile key="c"><TT y="20" s="19" l="26">123</TT>{ln(27)}</Tile>,
  <Tile key="d"><TT y="20" s="19" c="#f00" l="26">123</TT>{ln(27)}</Tile>,
  <Tile key="e"><path d="M1 2h24l6 6v19" stroke={C} strokeWidth="2.2" /><TT x="11" y="10" s="6.5" l="15" c={C}>501</TT>{ln(11, G, 1.2)}<TT x="11" y="18" s="6.5" l="15" c={C}>502</TT>{ln(19, G, 1.2)}<TT x="11" y="26" s="6.5" l="15" c={C}>503</TT>{ln(27, G, 1.2)}<path d="M20 11l7-6M20 19l7-6M20 27l7-6" stroke={G} /></Tile>,
  <Tile key="f">{ln(24, G, 2.4)}<text x="3" y="21" fontSize="9" fontStyle="italic" fill={C} fontFamily="Liberation Sans">A</text><text x="23" y="11" fontSize="10" fontStyle="italic" fill={C} fontFamily="Liberation Sans">A</text><path d="M12 18l9-7" stroke={Y} strokeWidth="1.8" /><path d="M23 9l-7 1 3 5z" fill={Y} /></Tile>,
];
const tiles3 = [
  <Tile key="a"><TT y="12" s="12" l="18" c={Y}>01</TT>{ln(14)}<TT y="27" s="12" l="18">01</TT>{ln(29)}<path d="M16 10v6" stroke={R} strokeWidth="1.4" /><path d="M16 11l-3 4h6z" fill={R} /></Tile>,
  <Tile key="b"><TT y="12" s="12" l="18">01</TT>{ln(14)}<TT y="27" s="12" l="18" c={Y}>01</TT>{ln(29)}<path d="M16 10v6" stroke={R} strokeWidth="1.4" /><path d="M16 11l-3 4h6z" fill={R} /></Tile>,
];

const Chev = () => <Chevron viewBox="0 0 14 10"><path d="M1 1l6 8 6-8" fill="none" stroke="#444" strokeWidth="1.2" /></Chevron>;

const CAD = 'Roboto, "Liberation Sans", sans-serif';
const T = ({ cx, cy, len, cap, rot = 0, c = '#fff', children }) => (
  <text transform={`translate(${cx} ${cy}) rotate(${rot})`} x={-len / 2} y={cap / 2} fontSize={cap / 0.71} fontFamily={CAD} fontWeight="100" fill={c} textLength={len} lengthAdjust="spacingAndGlyphs">{children}</text>
);
const Rct = ({ x, y, x2, y2, c = '#fff', w = 1.2 }) => <rect x={x} y={y} width={x2 - x} height={y2 - y} fill="none" stroke={c} strokeWidth={w} />;
const L = ({ d, c = '#fff', w = 1.2 }) => <path d={d} fill="none" stroke={c} strokeWidth={w} />;
const ArrH = ({ x, tip, y }) => <path d={`M${x} ${y - 6}L${tip} ${y}L${x} ${y + 6}z`} fill="#fff" />;
const ArrV = ({ y, tip, x }) => <path d={`M${x - 6} ${y}L${x} ${tip}L${x + 6} ${y}z`} fill="#fff" />;

const Grid = ({ x0, x1, vstart, top = 307, bot = 1248 }) => {
  const vs = [];
  for (let x = vstart; x < x1; x += 68) vs.push(x);
  const hs = [];
  for (let y = 315; y < bot; y += 68) hs.push(y);
  return (
    <g stroke="#5c5c5c" strokeWidth="1">
      {vs.map(x => <path key={x} d={`M${x} ${top}V${bot}`} />)}
      {hs.map(y => <path key={y} d={`M${x0} ${y}H${x1}`} />)}
    </g>
  );
};

const Dims = ({ ox, a, b, dimx, dx1, dx2, a2, b2, tarrows, hx1, hx2 }) => (
  <g>
    <L d={`M${hx1} 322H${hx2}`} />
    {tarrows.map(([x, tip]) => <ArrH key={x} x={x} tip={tip} y={322} />)}
    {[a, a2, b2, b].map(x => <L key={x} d={`M${x} 307V450`} />)}
    <L d={`M${a} 458H${ox + 228}M${ox + 256} 458H${ox + 288}M${ox + 317} 458H${b}`} />
    <L d={`M${a} 1137H${ox + 228}M${ox + 256} 1137H${ox + 288}M${ox + 317} 1137H${b}`} />
    {[a, b].map(x => <L key={x} d={`M${x} 458V617M${x} 646V676M${x} 706V888M${x} 917V948M${x} 978V1137`} />)}
    <L d={`M${dimx} 390V1205`} />
    <ArrV y={424} tip={457} x={dimx} />
    <ArrV y={546} tip={514} x={dimx} />
    <ArrV y={1048} tip={1081} x={dimx} />
    <ArrV y={1170} tip={1138} x={dimx} />
    {[458, 512, 1082, 1137].map(y => <L key={y} d={`M${dx1} ${y}H${dx2}`} />)}
  </g>
);

const Ucs = ({ x, tx }) => (
  <g>
    <L d={`M${x} 1094H${x + 33}M${x} 1128H${x + 33}`} c="#e56a6a" w="1.6" />
    <L d={`M${x} 1036V1128M${x + 33} 1094V1128`} c="#2aa24a" w="1" />
    <L d={`M${x + 33} 1128H${x + 84}`} />
    <L d={`M${x + 22} 1108L${x + 97} 1086V1016`} />
    <T cx={x + 16} cy={1112} len={20} cap={28} c="#fff">W</T>
    <T cx={x + 100} cy={1128} len={15} cap={22} c="#e56a6a">X</T>
    <T cx={x} cy={1024} len={14} cap={20} c="#2aa24a">Y</T>
    <T cx={tx} cy={1051} len={54} cap={34} rot={-90}>40</T>
  </g>
);

const Drawing1 = () => (
  <svg width="944" height="941" viewBox="60 307 944 941" style={{ display: 'block' }}>
    <Grid x0={60} x1={1004} vstart={113} />
    <Dims ox={221} a={221} b={764} a2={276} b2={711} dimx={900} dx1={772} dx2={918} hx1={154} hx2={832}
      tarrows={[[189, 220], [310, 277], [676, 709], [798, 765]]} />
    <text x="366" y="316" fontSize="38" fontFamily={CAD} fontWeight="100" fill="#fff" letterSpacing="2">10</text>
    <text x="448" y="316" fontSize="38" fontFamily={CAD} fontWeight="100" fill="#fff" letterSpacing="9">320</text>
    <text x="730" y="316" fontSize="38" fontFamily={CAD} fontWeight="100" fill="#fff">7</text>
    <Rct x={276} y={512} x2={711} y2={1082} />
    <L d="M316 512V926M662 512V926M316 553H662M316 729H662M316 763H662M276 926H711M276 967H711" />
    <Rct x={337} y={576} x2={398} y2={706} />
    <T cx={368} cy={641} len={59} cap={29} rot={-90}>CB1</T>
    <Rct x={419} y={587} x2={653} y2={693} />
    <L d="M478 587V693M536 587V693M594 587V693" />
    <T cx={449} cy={644} len={34} cap={27} rot={-90}>X1</T>
    <T cx={507} cy={641} len={42} cap={27} rot={-90}>X2</T>
    <T cx={565} cy={641} len={42} cap={27} rot={-90}>X3</T>
    <T cx={624} cy={640} len={57} cap={27} rot={-90}>AR1</T>
    <Rct x={337} y={792} x2={376} y2={890} />
    <T cx={356} cy={842} len={65} cap={26} rot={-90}>AR2</T>
    <Rct x={444} y={789} x2={638} y2={897} />
    <L d="M541 789V897" />
    <T cx={491} cy={844} len={59} cap={27}>UT1</T>
    <T cx={590} cy={844} len={68} cap={27}>UT2</T>
    <Rct x={344} y={1009} x2={662} y2={1060} />
    <T cx={511} cy={1035} len={59} cap={27}>TB1</T>
    <T cx={874} cy={615} len={54} cap={34} rot={-90}>40</T>
    <T cx={874} cy={797} len={86} cap={34} rot={-90}>420</T>
    <Ucs x={884} tx={955} />
  </svg>
);
const Drawing2 = () => (
  <svg width="945" height="941" viewBox="1035 307 945 941" style={{ display: 'block' }}>
    <Grid x0={1035} x1={1980} vstart={1088} />
    <L d="M1035 316H1980" c="#d03030" />
    <L d="M1864 307V1248" c="#17803c" />
    <Dims ox={1196} a={1196} b={1740} a2={1251} b2={1686} dimx={1876} dx1={1748} dx2={1893} hx1={1130} hx2={1807}
      tarrows={[[1163, 1195], [1286, 1253], [1651, 1684], [1773, 1740]]} />
    <Rct x={1851} y={300} x2={1877} y2={330} />
    <text x="1341" y="316" fontSize="38" fontFamily={CAD} fontWeight="100" fill="#fff" letterSpacing="2">10</text>
    <text x="1423" y="316" fontSize="38" fontFamily={CAD} fontWeight="100" fill="#fff" letterSpacing="9">320</text>
    <text x="1706" y="316" fontSize="38" fontFamily={CAD} fontWeight="100" fill="#fff">7</text>
    <Rct x={1251} y={513} x2={1686} y2={1083} />
    <L d="M1291 513V927M1637 513V927M1291 553H1637M1251 927H1686M1251 967H1686" />
    <Rct x={1312} y={577} x2={1373} y2={706} />
    <T cx={1344} cy={642} len={58} cap={29} rot={-90}>CB1</T>
    <Rct x={1578} y={599} x2={1618} y2={697} />
    <T cx={1598} cy={648} len={66} cap={27} rot={-90}>AR2</T>
    <Rct x={1324} y={772} x2={1441} y2={877} />
    <L d="M1382 772V877" />
    <T cx={1354} cy={825} len={33} cap={27} rot={-90}>X1</T>
    <T cx={1412} cy={825} len={42} cap={27} rot={-90}>X2</T>
    <Rct x={1453} y={770} x2={1552} y2={878} />
    <T cx={1502} cy={825} len={60} cap={27}>UT1</T>
    <Rct x={1564} y={770} x2={1622} y2={876} />
    <T cx={1594} cy={824} len={58} cap={27} rot={-90}>AR1</T>
    <Rct x={1319} y={1010} x2={1564} y2={1061} />
    <T cx={1441} cy={1035} len={58} cap={28}>TB1</T>
    <Rct x={1597} y={1007} x2={1651} y2={1061} />
    <T cx={1624} cy={1035} len={43} cap={28}>TR</T>
    <T cx={1850} cy={614} len={52} cap={33} rot={-90}>40</T>
    <T cx={1850} cy={797} len={85} cap={33} rot={-90}>420</T>
    <Ucs x={1859} tx={1930} />
  </svg>
);

const GT = ({ cx, cy, len, cap, rot = 0, children }) => (
  <text transform={`translate(${cx} ${cy}) rotate(${rot})`} x={-len / 2} y={cap / 2} fontSize={cap / 0.71} fontFamily={CAD} fontWeight="300" fill="#00e000" textLength={len} lengthAdjust="spacingAndGlyphs">{children}</text>
);
const GR2 = ({ x, y, x2, y2 }) => <Rct x={x} y={y} x2={x2} y2={y2} c="#00e000" w={1} />;
const PreviewArt = () => (
  <svg width="447" height="446" viewBox="2099 999 447 446" style={{ display: 'block' }}>
    <path d="M2514 999V1445" stroke="#fff" strokeWidth="2" />
    <ellipse cx="2500" cy="1045" rx="37" ry="37" fill="#00ff00" />
    <path d="M2514 1012V1080" stroke="#888" strokeWidth="3" />
    <GR2 x={2269.5} y={1131.5} x2={2381} y2={1182} />
    <L d="M2297 1131V1182M2325.5 1131V1182M2352.5 1131V1182" c="#00e000" w={1} />
    <GR2 x={2356.5} y={1137} x2={2376} y2={1185} />
    <GT cx={2283} cy={1157} len={18} cap={13} rot={-90}>X1</GT>
    <GT cx={2311} cy={1157} len={22} cap={13} rot={-90}>X2</GT>
    <GT cx={2339} cy={1157} len={22} cap={13} rot={-90}>X3</GT>
    <GT cx={2366} cy={1160} len={30} cap={12} rot={-90}>AR1</GT>
    <GT cx={2367} cy={1160} len={30} cap={12} rot={-90}>AR2</GT>
    <L d="M2220 1199H2385M2220 1215H2385" c="#00e000" w={1} />
    <GR2 x={2236} y={1219} x2={2292} y2={1269} />
    <L d="M2263 1219V1269" c="#00e000" w={1} />
    <GR2 x={2229} y={1229.5} x2={2248.5} y2={1276.5} />
    <GT cx={2240} cy={1252} len={32} cap={13} rot={-90}>AR2</GT>
    <GT cx={2250} cy={1244} len={16} cap={13} rot={-90}>X1</GT>
    <GT cx={2278} cy={1244} len={22} cap={13} rot={-90}>X2</GT>
    <GR2 x={2280} y={1228} x2={2373.6} y2={1280} />
    <L d="M2327 1228V1280" c="#00e000" w={1} />
    <GR2 x={2297} y={1218} x2={2345} y2={1271} />
    <GT cx={2307} cy={1254} len={28} cap={14}>UT1</GT>
    <GT cx={2335} cy={1245} len={26} cap={14}>UT1</GT>
    <GT cx={2352} cy={1254} len={24} cap={14}>UT2</GT>
    <GR2 x={2349} y={1218} x2={2377.5} y2={1269} />
    <GT cx={2364} cy={1251} len={30} cap={13} rot={-90}>AR1</GT>
    <GT cx={2289} cy={1345} len={26} cap={15}>TB1</GT>
    <GT cx={2314} cy={1345} len={26} cap={15}>TB1</GT>
    <GR2 x={2349} y={1332} x2={2392} y2={1358} />
    <GR2 x={2366.5} y={1331} x2={2392} y2={1357} />
    <GT cx={2379} cy={1344} len={20} cap={15}>TR</GT>
  </svg>
);

const Logo = () => (
  <Svg w={36} h={36} vb="0 0 36 36">
    <defs><linearGradient id="lg" x1="0" y1="0" x2="1" y2="1"><stop offset="0" stopColor="#2e8bf2" /><stop offset="1" stopColor="#1560d8" /></linearGradient></defs>
    <rect width="36" height="36" fill="url(#lg)" />
    <path d="M11 8c5 0 6 2 8 9l3 11h-4l-2-7-4 7H8l6-12-1-3c-1-2-2-2-3-2z" fill="#fff" />
  </Svg>
);
const LogoWrap = styled.div`margin: 10px 0 0 12px; flex: none;`;
const DocLogo = () => (
  <Svg w={28} h={36} vb="0 0 28 36">
    <path d="M0 0h23l5 5v31H0z" fill="#3a90f0" />
    <path d="M23 0v5h5z" fill="#d4e6fb" />
    <path d="M9 12c4 0 5 2 6 6l3 10h-4l-2-6-3 6H5l5-10-1-3h-2z" fill="#fff" />
  </Svg>
);
const MinGlyph = () => <svg width="26" height="16" viewBox="0 0 26 16"><rect x=".5" y="1.5" width="25" height="13" rx="2" fill="#eaeaea" stroke="#8a96a5" /></svg>;
const MaxGlyph = () => <svg width="22" height="30" viewBox="0 0 22 30"><rect x="1" y="1" width="20" height="28" rx="2" fill="#e8e8e8" stroke="#78869a" /><rect x="6" y="9" width="10" height="11" fill="none" stroke="#556" strokeWidth="1.5" /></svg>;
const XGlyph = () => <svg width="26" height="28" viewBox="0 0 26 28"><path d="M4 3l9 8 9-8M4 25l9-8 9 8M13 11v6" fill="none" stroke="#8a8a8a" strokeWidth="7" /><path d="M4 3l9 10 9-10M4 25l9-10 9 10" fill="none" stroke="#f4f4f4" strokeWidth="4.5" /></svg>;
const TabX = ({ c, s = 24 }) => <svg width={s} height={s} viewBox="0 0 22 22" style={{ flex: 'none' }}><path d="M2 1l18 20M20 1L2 21" stroke={c} strokeWidth="1.4" fill="none" /></svg>;
const Tri = ({ dir, bar }) => (
  <svg width="18" height="26" viewBox="0 0 14 22">
    {dir === 'l' ? <path d={bar ? 'M12 2v18L4 11zM1 2h2v18H1z' : 'M11 2v18L2 11z'} fill="#222" /> : <path d={bar ? 'M2 2v18l8-9zM11 2h2v18h-2z' : 'M3 2v18l9-9z'} fill="#222" />}
  </svg>
);

const MENU = [
  ['ファイル(F)', 105, -1.6], ['編集(E)', 83, 0.6], ['表示(V)', 86, 0.6], ['挿入(I)', 74, 0.4], ['設定(S)', 82, 0.6], ['ツール(T)', 88, -1.4], ['作成(D)', 86, 0.6],
  ['寸法記入(N)', 141, 1.4], ['修正(M)', 92, 1], ['パラメトリック(P)', 165, -1], ['ウィンドウ(W)', 135, -1], ['ヘルプ(H)', 98, 0], ['プロジェクト(P)', 147, -1.6],
  ['配線(L)', 81, 0.6], ['シンボル(S)', 115, -0.6], ['属性(A)', 86, 0.6], ['電気編集(C)', 139, 1.4], ['BJツール(B)', 113, -1.6], ['?', 10, 0],
];

const T1 = ['newfile', 'open', 'save', '|', 'preview', 'printbolt', 'printto', '|', 'cut', 'copy', 'paste', 'brush', 'dropper', 'select', '|', 'xred', '|', 'undo', 'redo', '|', 'props', 'sheet', 'gear', 'notes*', 'expand', '|', 'help'];
const T1b = ['zoomin', 'zoomout', 'zoompan', 'zoomprev', '|', 'orbit', 'compass', '|', 'eye', 'ucs', 'camera', 'persp'];
const T1c = ['image', '|', 'cube', 'eyesave', '|', 'panel1', 'panel2', 'panel3'];
const T2a = ['layer'];
const T2b = ['layercheck', 'layerstar', '|'];
const T2c = ['dashdot', 'snapline', '|', 'end*', 'mid*', 'mid2*', 'cen*', 'node', 'perp*', 'par', 'tan*', 'quad*', 'circsq*', 'dot', '|', 'inter*', 'ext', 'tri', '|', 'xs', '|', 'zup', 'rectred', 'zdown'];

const renderTools = (list, w) => list.map((n, i) => {
  if (n === '|') return <Sep key={i} />;
  const on = n.endsWith('*');
  return <Cell key={i} $on={on} $w={on ? 38.5 : w}><Ic n={on ? n.slice(0, -1) : n} /></Cell>;
});

const LEFT = ['line', 'arc', 'rect', '|', 'c3', 'c2', 'ell', 'ellarc', 'spline', 'gdot', '|', 'hatch', 'grad', 'bound', 'surf', 'region', 'wipe', '|', 'cloud', 'table', 'bigA', 'bigAu', '#', 'b1', 'b2', 'b3', 'b4', 'b5', '|', 'b6', '|', 'abc', '|'];
const RIGHT = ['move', 'cpy', 'offset', 'sbrush', 'dropper', 'scale', '|', 'rot', 'rot3', '|', 'mirror', 'mirror3', '|', 'array', '|', 'align', '|', 'trim', 'extline', 'brk', 'join', 'stretch:30', '|', 'chamf', '|', 'cham2', 'fillet', '|', 'pat1', 'pat2', '|', 'hedit', 'pedit', 'spedit', '|', 'box3', 'bomb', '|'];

const renderV = (list, m) => list.map((item, i) => {
  const [n, h] = item.split(':');
  if (n === '|') return <VSep key={i} $m={m} />;
  if (n === '#') return <GripHead key={i} $h={24}><HGrip $t={8} /></GripHead>;
  return <VCell key={i} $h={h ? Number(h) : undefined}><Ic n={n} /></VCell>;
});

const STATUS = [
  ['Ready', 423, 0, 1, 0], ['2271.2709, 17348.7407, 0', 328, 0, 0, 0.9], ['NUM', 65], ['ISO-25', 90, 0, 0, 0.5], ['2D作図 (ツールバー)', 233], ['スナップ', 98, 0, 0, -2], ['グリッド', 88, 0, 0, -2],
  ['直交', 60, 1], ['極トラック', 110, 1, 0, -1.4], ['図形スナップ', 140, 0, 0, -1], ['スナップトラック', 160, 0, 0, -2.4], ['線の太さ', 102, 1, 0, -1.2], ['タイル', 69, 0, 0, -2.6], ['DUCS', 75, 0, 0, -0.6], ['ダイナミック', 122, 0, 0, -3.5],
  ['クワッド', 81, 0, 0, -3], ['RT', 43], ['HKA', 58], ['LOCKUI', 101, 1], ['無し', 54],
];

const PROPS = [
  ['色', <><Swatch $w={38} $h={38} $ml={2} $mr={7} />ByLayer</>],
  ['画層', '0'],
  ['線種', <><LineSample $w={50} $t={1} $c="#555" $mr={7} />ByLayer</>],
  ['線種尺度', '1'],
  ['線の太さ', <><LineSample $w={40} $t={3} $c="#111" $mr={6} />ByLayer</>],
  ['透過性', 'ByLayer'],
  ['高度', '0 mm'],
];

const Window = ({ on, title, children }) => (
  <Win $on={on}>
    <WinTitle $on={on}>
      <TitleLogo><DocLogo /></TitleLogo>
      <TitleFill $on={on} />
      <TitleText $on={on}>{title}</TitleText>
      <TitleBtns>
        <TitleBtn $on={on}><MinWrap><MinGlyph /></MinWrap></TitleBtn>
        <TitleBtn $on={on}><MaxGlyph /></TitleBtn>
        <TitleBtn $on={on} $close={on}><XGlyph /></TitleBtn>
      </TitleBtns>
    </WinTitle>
    <CanvasBox>{children}</CanvasBox>
    <Strip>
      <NavBtn><Tri dir="l" bar /></NavBtn>
      <NavBtn><Tri dir="l" /></NavBtn>
      <NavBtn><Tri dir="r" /></NavBtn>
      <NavBtn><Tri dir="r" bar /></NavBtn>
      <SheetIcon><svg width="29" height="30" viewBox="0 0 29 30"><path d="M0 10h29M0 20h29" stroke="#999" /></svg></SheetIcon>
      <SheetTab $w={72} $on>モデル</SheetTab>
      <SheetTab $w={127}>レイアウト1</SheetTab>
      <SheetTab $w={127}>レイアウト2</SheetTab>
      <SheetTab $w={27} $last>+</SheetTab>
    </Strip>
  </Win>
);

export default function App() {
  return (
    <>
      <Global />
      <Page>
        <TitleBar>
          <LogoWrap><Logo /></LogoWrap>
          <AppName>BricsCAD</AppName>
          <WinBtns>
            <WinBtn><svg width="20" height="20" viewBox="0 0 20 20"><path d="M0 10h20" stroke="#000" strokeWidth="2" /></svg></WinBtn>
            <WinBtn><svg width="20" height="20" viewBox="0 0 20 20"><rect x="1" y="1" width="18" height="18" fill="none" stroke="#000" strokeWidth="2" /></svg></WinBtn>
            <WinBtn><svg width="20" height="20" viewBox="0 0 20 20"><path d="M0 0l20 20M20 0L0 20" stroke="#000" strokeWidth="1.6" /></svg></WinBtn>
          </WinBtns>
        </TitleBar>
        <MenuBar>{MENU.map(([t, w, ls]) => <MenuItem key={t} $w={w} $ls={ls}>{t}</MenuItem>)}</MenuBar>

        <ToolRow $h={48} $line="#a8a8a8">
          <Tool $w={889} $bg="#fff"><Grip $m={8} />{renderTools(T1)}</Tool>
          <Tool $w={318} $bg="#f0f0f0"><Grip /><Combo $w={280} $ml={2}>2D作図 (ツールバー)<Chev /></Combo></Tool>
          <Tool $w={797} $end>
            <Grip $m={4} />{renderTools(['sync'])}<Spacer $w={9} />{renderTools(T1b)}<Spacer $w={17} />
            <Svg w={52} h={32} vb="0 0 52 32"><path d="M0 0h14v22l-7 8-7-8z" fill="#1c73d8" /><path d="M14 10h36v14H14z" fill="#dcdcdc" stroke="#ccc" /></Svg>
            <Spacer $w={14} />{renderTools(T1c)}
          </Tool>
        </ToolRow>
        <ToolRow $h={48} $line="#c8c8c8">
          <Tool $w={1159} $bg="#fff">
            <Grip $m={8} />{renderTools(T2a)}
            <Combo $w={380} $pl={5} $ml={-3}>
              <Ic n="bulb" /><Ic n="sun" /><Ic n="lock" /><Spacer $w={3} /><Ic n="print" />
              <Spacer $w={6} /><Swatch $w={31} $h={30} />0<Chev />
            </Combo>
            {renderTools(T2b)}
            <Combo $w={211} $ml={2} $pl={6}><Swatch />ByLayer<Chev /></Combo>
            <Combo $w={211} $ml={2} $pl={6}><LineSample $w={56} $t={1} $c="#444" />ByLayer<Chev /></Combo>
            <Combo $w={201} $ml={2} $pl={5}><LineSample $w={40} $t={3} $c="#111" />ByLayer<Chev /></Combo>
          </Tool>
          <Tool $w={837} $end $bg="#fff"><Grip $m={9.5} />{renderTools(T2c)}</Tool>
        </ToolRow>

        <Body>
          <VBar $w={43}>
            <GripHead><HGrip /></GripHead>
            {renderV(LEFT)}
          </VBar>
          <Center>
            <DocTabs>
              <DocTab $on $w={465} $pl={210}>盤改造_20161217*<Spacer $w={2} /><TabX c="#000" /></DocTab>
              <DocTab $w={463} $pl={210}>盤改造_20161110*<Spacer $w={16} /><TabX c="#999" /></DocTab>
              <DocTab $plain $w={44} $pl={10}><svg width="24" height="24" viewBox="0 0 24 24"><path d="M12 0v24M0 12h24" stroke="#222" strokeWidth="1.2" /></svg></DocTab>
            </DocTabs>
            <MdiArea>
              <Window title="盤改造_20161110.dwg"><Drawing1 /></Window>
              <Window on title="盤改造_20161217.dwg"><Drawing2 /></Window>
            </MdiArea>
            <CmdArea>
              <CmdSide><TabX c="#777" s={18} /><CmdGrip /></CmdSide>
              <CmdMain>
                <CmdTop />
                <History>
                  <HistText><HistColon>:</HistColon>もう一方のコーナー:</HistText>
                  <Scroll>
                    <svg width="18" height="12" viewBox="0 0 18 12"><path d="M3 10l6-8 6 8" fill="none" stroke="#555" strokeWidth="2" /></svg>
                    <svg width="18" height="12" viewBox="0 0 18 12"><path d="M3 2l6 8 6-8" fill="none" stroke="#555" strokeWidth="2" /></svg>
                  </Scroll>
                </History>
                <CmdInput>:</CmdInput>
              </CmdMain>
            </CmdArea>
          </Center>
          <VBar $w={43} $b>
            <GripHead $h={17}><HGrip /></GripHead>
            {renderV(RIGHT, 3.5)}
          </VBar>
          <VBar $w={47} $b>
            <GripHead $h={17}><HGrip /></GripHead>
            <VCell $h={36}>{tiles[0]}</VCell>
            {tiles.slice(1, 7).map((t, i) => <VCell key={i}>{t}</VCell>)}
            <VSep />
            {tiles.slice(7, 12).map((t, i) => <VCell key={i}>{t}</VCell>)}
            <VSep />
            <VCell>{tiles[12]}</VCell>
            <VSep />
            {tiles.slice(13, 17).map((t, i) => <VCell key={i}>{t}</VCell>)}
            <VSep />
            <VCell>{tiles[17]}</VCell>
            <VSep />
            <VCell>{tiles[18]}</VCell>
            <VSep />
            <VCell>{tiles[19]}</VCell>
            <VSep />
            <VCell>{tiles[20]}</VCell>
            <VSep />
            <VCell>{tiles[21]}</VCell>
            <GripHead $h={24}><HGrip $t={8} /></GripHead>
            {tiles2.map((t, i) => <VCell key={i}>{t}</VCell>)}
            <VSep />
            {tiles3.map((t, i) => <VCell key={i}>{t}</VCell>)}
            <VSep />
          </VBar>
          <Panel>
            <PanelHead>
              <HGrip $t={4} />
              <PanelClose viewBox="0 0 22 22"><path d="M2 2l18 18M20 2L2 20" stroke="#333" strokeWidth="1.4" /></PanelClose>
            </PanelHead>
            <SelRow>
              <SelCombo>選択無し<Chev /></SelCombo>
              <Spacer $w={4} /><Ic n="funnel" />
              <EyeBtn><Ic n="eye" /></EyeBtn>
            </SelRow>
            <Props>
              <Row><Exp><ExpBox /></Exp><Section>標準</Section></Row>
              {PROPS.map(([k, v]) => <Row key={k}><Exp /><Label>{k}</Label><Value>{v}</Value></Row>)}
              <Row><Exp><ExpBox /></Exp><Section>ビュー</Section></Row>
              <Row><Exp><ExpBox $plus /></Exp><Label>カメラ</Label><Value>0, 0, 1</Value></Row>
              <Row><Exp><ExpBox $plus /></Exp><Label>目標</Label><Value>0, 0, 0</Value></Row>
              <Row><Exp /><Label>パース</Label><Value>オフ</Value></Row>
              <Row><Exp /><Label>レンズの長さ</Label><Value>50</Value></Row>
            </Props>
          </Panel>
        </Body>

        <StatusBar>
          {STATUS.map(([t, w, gray, left, ls]) => <Stat key={t} $w={w} $gray={!!gray} $left={!!left} $ls={ls} $nb={!!left}>{t}</Stat>)}
          <Stat $w={14} $nb><svg width="10" height="6" viewBox="0 0 10 6"><path d="M0 0h10L5 6z" fill="#222" /></svg></Stat>
        </StatusBar>

        <Float>
          <FloatHead><FloatIcon />BcadParallel<FloatX>×</FloatX></FloatHead>
          <FloatBar>
            <StopBtn>Stop</StopBtn>
            <Check><svg width="20" height="18" viewBox="0 0 20 18"><path d="M2 9l6 6 10-12" fill="none" stroke="#333" strokeWidth="1.6" /></svg></Check>
            Capture
          </FloatBar>
          <InputRow><Hex>00030FCE</Hex><Hex>00030FDC</Hex></InputRow>
          <Preview><PreviewArt /></Preview>
        </Float>
      </Page>
    </>
  );
}
